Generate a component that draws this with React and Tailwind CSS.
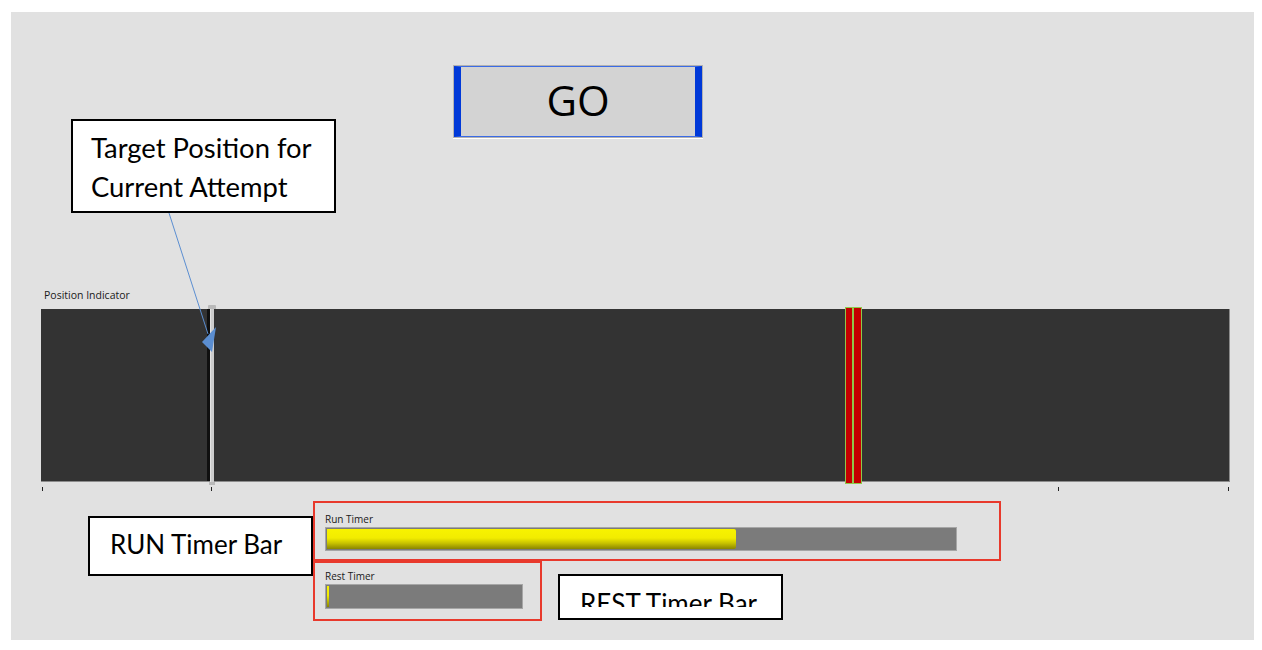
import React from "react";

function Bar({ width, fill, fillClass }) {
  return (
    <div
      className="border border-[#a6a6a6] bg-[#7b7b7b] p-px flex"
      style={{ width }}
    >
      <div className="flex-1 flex bg-[#7b7b7b] h-full">
        <div className={fillClass} style={{ width: fill }} />
      </div>
    </div>
  );
}

export default function App() {
  return (
    <div className="w-[1262px] h-[650px] bg-white pt-[12px] pl-[11px] overflow-hidden">
      <div className="relative w-[1243px] h-[628px] bg-[#e1e1e1] flex flex-col items-start">
        {/* GO button */}
        <div className="ml-[442px] mt-[53px] w-[250px] h-[73px] border border-[#b2b2b2] shadow-[0_1px_0_#ffffff] flex">
          <div className="flex-1 border-y border-y-[#3b6be6] border-x-[7px] border-x-[#0039d8] bg-[#d3d3d3] flex items-center justify-center pb-[4px]">
            <span className="font-['Open_Sans',sans-serif] text-[42px] leading-none text-black">
              GO
            </span>
          </div>
        </div>

        {/* Position indicator label */}
        <div className="ml-[33px] mt-[151px] h-[12px] text-[10.5px] leading-[12px] font-['Open_Sans',sans-serif] text-[#1a1a1a]">
          Position Indicator
        </div>

        {/* Chart */}
        <div className="ml-[30px] mt-[8px] w-[1189px] h-[173px] bg-[#333333] border-r border-b border-[#8c8c8c] relative">
          {/* target slider */}
          <div className="absolute left-[166px] top-0 bottom-0 w-[3px] bg-[#101010]" />
          <div className="absolute left-[169px] top-[-2px] bottom-[-2px] w-[4px] bg-[#cdcdcd] border-l border-[#e4e4e4]" />
          <div className="absolute left-[167px] top-[-4px] w-[8px] h-[4px] bg-[#b9b9b9] rounded-t-[1px]" />
          <div className="absolute left-[168px] bottom-[-4px] w-[6px] h-[3px] bg-[#b9b9b9]" />
          {/* red marker */}
          <div className="absolute left-[804px] top-[-2px] h-[177px] w-[17px] flex">
            <div className="w-[8px] h-full bg-[#c40000] border border-[#8fc84a]" />
            <div className="w-[9px] h-full bg-[#c40000] border border-[#8fc84a]" />
          </div>
        </div>

        {/* Ticks */}
        <div className="ml-[30px] mt-[5px] w-[1189px] h-[4px] relative">
          <div className="absolute left-[1px] top-0 w-px h-[4px] bg-[#222]" />
          <div className="absolute left-[170px] top-0 w-px h-[4px] bg-[#222]" />
          <div className="absolute left-[1017px] top-0 w-px h-[4px] bg-[#222]" />
          <div className="absolute left-[1187px] top-0 w-px h-[4px] bg-[#222]" />
        </div>

        {/* Run timer */}
        <div className="ml-[302px] mt-[10px] w-[688px] h-[60px] border-2 border-[#e8392c] pl-[10px] pt-[10px] flex flex-col items-start">
          <div className="h-[12px] text-[10px] leading-[12px] font-['Open_Sans',sans-serif] text-[#1a1a1a]">
            Run Timer
          </div>
          <div className="mt-[2px] h-[24px] w-[632px] flex">
            <Bar
              width={632}
              fill={409}
              fillClass="h-full rounded-r-[2px] bg-[linear-gradient(to_bottom,#f8f300_0%,#f2ec00_45%,#c9c400_70%,#8a8600_100%)]"
            />
          </div>
        </div>

        {/* Rest timer */}
        <div className="ml-[302px] w-[229px] h-[60px] border-2 border-[#e8392c] pl-[10px] pt-[7px] flex flex-col items-start">
          <div className="h-[12px] text-[10px] leading-[12px] font-['Open_Sans',sans-serif] text-[#1a1a1a]">
            Rest Timer
          </div>
          <div className="mt-[2px] h-[25px] w-[198px] flex">
            <Bar
              width={198}
              fill={2}
              fillClass="h-full bg-[linear-gradient(to_bottom,#f8f300_0%,#f2ec00_45%,#8a8600_100%)]"
            />
          </div>
        </div>

        {/* Callouts (annotations over the UI) */}
        <div className="absolute left-[60px] top-[107px] w-[265px] h-[94px] bg-white border-2 border-black pl-[18px] pt-[7px] font-['Lato',sans-serif] text-[27.4px] leading-[39px] text-black">
          <div>Target Position for</div>
          <div>Current Attempt</div>
        </div>

        <div className="absolute left-[77px] top-[504px] w-[225px] h-[60px] bg-white border-2 border-black pl-[20px] pt-[11px] font-['Lato',sans-serif] text-[26px] leading-[31px] text-black whitespace-nowrap">
          RUN Timer Bar
        </div>

        <div className="absolute left-[547px] top-[562px] w-[225px] h-[46px] bg-white border-2 border-black">
          <div className="h-[31px] overflow-hidden pl-[20px] pt-[12px] font-['Lato',sans-serif] text-[26px] leading-[31px] text-black whitespace-nowrap">
            REST Timer Bar
          </div>
        </div>

        {/* Arrow */}
        <svg
          className="absolute left-0 top-0 pointer-events-none"
          width="1243"
          height="628"
          viewBox="0 0 1243 628"
        >
          <line x1="158" y1="201" x2="197" y2="322" stroke="#5b8ed1" strokeWidth="1" />
          <polygon points="191,330 205,315 201,340" fill="#5b8ed1" />
        </svg>
      </div>
    </div>
  );
}
